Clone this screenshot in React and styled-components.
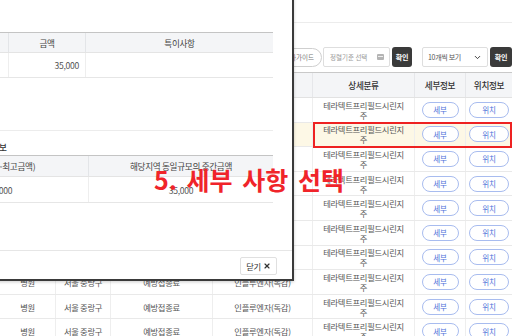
import React from 'react';
import styled, { createGlobalStyle } from 'styled-components';
import { ChevronDown, X } from 'lucide-react';

const GlobalStyle = createGlobalStyle`
  html, body { margin: 0; padding: 0; background: #fff; }
  body {
    font-family: "Noto Sans CJK KR", "Noto Sans", sans-serif;
    overflow: hidden;
  }
  * { box-sizing: border-box; }
`;

const Page = styled.div`
  position: relative;
  width: 512px;
  height: 336px;
  overflow: hidden;
  background: #fff;
`;

const TopBar = styled.div`
  height: 23px;
  border-bottom: 1px solid #ececec;
`;

const Toolbar = styled.div`
  display: flex;
  justify-content: flex-end;
  align-items: center;
  height: 20px;
  margin-top: 24px;
  gap: 2px;
`;

const GuidePill = styled.div`
  display: flex;
  align-items: center;
  height: 19px;
  padding: 0 7px 0 12px;
  border: 1px solid #cfcfcf;
  border-radius: 10px;
  font-size: 6.5px;
  color: #777;
  margin-right: -1px;
  white-space: nowrap;
`;

const DateInput = styled.div`
  display: flex;
  align-items: center;
  justify-content: space-between;
  width: 67px;
  height: 20px;
  padding: 0 5px 0 6px;
  border: 1px solid #dedede;
  border-radius: 2px;
  font-size: 6.5px;
  color: #9a9a9a;
  white-space: nowrap;
`;

const CalIcon = styled.span`
  display: inline-block;
  width: 7px;
  height: 6px;
  background: #b4b4b4;
  border-radius: 1px;
  position: relative;
  &::after {
    content: '';
    position: absolute;
    left: 1px; right: 1px; top: 2px;
    height: 1px;
    background: #eee;
  }
`;

const DarkButton = styled.button`
  width: ${p => p.$w || 20}px;
  height: 20px;
  padding: 0;
  border: 0;
  border-radius: 3px;
  background: #3a3a3a;
  color: #fff;
  font-family: inherit;
  font-size: 7px;
  font-weight: 700;
  letter-spacing: -0.2px;
`;

const SelectBox = styled.div`
  display: flex;
  align-items: center;
  justify-content: space-between;
  width: 66px;
  height: 20px;
  margin-left: 8px;
  padding: 0 5px 0 5px;
  border: 1px solid #dedede;
  border-radius: 2px;
  font-size: 7px;
  color: #555;
  letter-spacing: -0.3px;
  white-space: nowrap;
`;

const BgTable = styled.div`
  margin-top: 5px;
`;

const COLS = '56px 55px 102px 100px 102px 51px 46px';

const HeadRow = styled.div`
  display: grid;
  grid-template-columns: ${COLS};
  height: 26px;
  background: #f4f5f7;
  border-top: 1px solid #c9c9c9;
  border-bottom: 1px solid #e2e2e2;
`;

const HeadCell = styled.div`
  display: flex;
  align-items: center;
  justify-content: center;
  font-size: 8.6px;
  font-weight: 500;
  color: #333;
  letter-spacing: -0.3px;
  border-right: ${p => (p.$last ? 'none' : '1px solid #e6e7ea')};
`;

const BodyRow = styled.div`
  display: grid;
  grid-template-columns: ${COLS};
  height: 24.6px;
  background: ${p => (p.$active ? '#fdf8e6' : '#fff')};
  border-bottom: 1px solid #e9e9e9;
`;

const Cell = styled.div`
  display: flex;
  align-items: center;
  justify-content: center;
  padding: 0 ${p => (p.$wrap ? 8 : 2)}px;
  font-size: 8.3px;
  line-height: 10px;
  color: #555;
  letter-spacing: -0.3px;
  text-align: center;
  white-space: ${p => (p.$wrap ? 'normal' : 'nowrap')};
  border-right: ${p => (p.$last ? 'none' : '1px solid #eeeeee')};
  overflow: hidden;
`;

const OutlineButton = styled.button`
  width: ${p => p.$w || 38}px;
  height: 16px;
  padding: 0;
  border: 1px solid #a8bcef;
  border-radius: 9px;
  background: #fff;
  color: #4d72d9;
  font-family: inherit;
  font-size: 7.5px;
  letter-spacing: -0.2px;
  flex: none;
`;

/* ---------- modal ---------- */

const Modal = styled.div`
  position: absolute;
  left: -110px;
  top: -20px;
  width: 404px;
  border: 2px solid #3a3a3a;
  background: #fff;
  z-index: 5;
  box-shadow: 0 1px 3px rgba(0, 0, 0, 0.2);
`;

const ModalBody = styled.div`
  padding: 50px 19px 47px 20px;
`;

const Section = styled.div`
  padding-bottom: 52px;
  border-bottom: 1px solid #ececec;
`;

const SectionTitle = styled.div`
  margin: 11px 0 3px;
  font-size: 8.6px;
  line-height: 10px;
  font-weight: 500;
  color: #333;
  letter-spacing: -0.3px;
  white-space: nowrap;
`;

const MTable = styled.div`
  width: 361px;
`;

const MHead = styled.div`
  display: grid;
  grid-template-columns: ${p => p.$cols};
  height: ${p => p.$h}px;
  background: #f4f5f7;
  border-top: 1px solid #c4c4c4;
  border-bottom: 1px solid #e4e4e4;
`;

const MRow = styled.div`
  display: grid;
  grid-template-columns: ${p => p.$cols};
  height: ${p => p.$h}px;
  border-bottom: 1px solid #e6e6e6;
`;

const MCell = styled.div`
  display: flex;
  align-items: center;
  justify-content: ${p => (p.$right ? 'flex-end' : 'center')};
  padding: 0 6px;
  font-size: 8.6px;
  color: ${p => (p.$head ? '#444' : '#555')};
  letter-spacing: -0.3px;
  white-space: nowrap;
  border-right: ${p => (p.$last ? 'none' : `1px solid ${p.$head ? '#e3e5e8' : '#eeeeee'}`)};
`;

const ModalFooter = styled.div`
  display: flex;
  justify-content: flex-end;
  padding: 6px 15px 4px;
  border-top: 1px solid #e6e6e6;
`;

const CloseButton = styled.button`
  display: flex;
  align-items: center;
  gap: 2px;
  height: 18px;
  width: 37px;
  justify-content: center;
  padding: 0;
  border: 1px solid #e0e0e0;
  border-radius: 2px;
  background: #fff;
  color: #333;
  font-family: inherit;
  font-size: 8.3px;
  letter-spacing: -0.3px;
`;

/* ---------- annotation ---------- */

const RedBox = styled.div`
  position: absolute;
  left: 313px;
  top: 122px;
  width: 199px;
  height: 26px;
  border: 2px solid #ee2222;
  z-index: 6;
  pointer-events: none;
`;

const Callout = styled.div`
  position: absolute;
  left: 154px;
  top: 167px;
  font-size: 25px;
  line-height: 1;
  font-weight: 700;
  word-spacing: 4px;
  color: #f0242a;
  white-space: nowrap;
  z-index: 7;
`;

const rows = Array.from({ length: 10 }, (_, i) => i);

export default function App() {
  const t1 = '97px 77px 187px';
  const t2 = '177px 184px';
  return (
    <Page>
      <GlobalStyle />
      <TopBar />
      <Toolbar>
        <GuidePill>검사가이드</GuidePill>
        <DateInput>
          <span>정렬기준 선택</span>
          <CalIcon />
        </DateInput>
        <DarkButton>확인</DarkButton>
        <SelectBox>
          <span>10개씩 보기</span>
          <ChevronDown size={9} strokeWidth={2.5} color="#333" />
        </SelectBox>
        <DarkButton $w={22}>확인</DarkButton>
      </Toolbar>

      <BgTable>
        <HeadRow>
          <HeadCell>구분</HeadCell>
          <HeadCell>지역</HeadCell>
          <HeadCell>분류</HeadCell>
          <HeadCell>항목</HeadCell>
          <HeadCell>상세분류</HeadCell>
          <HeadCell>세부정보</HeadCell>
          <HeadCell $last>위치정보</HeadCell>
        </HeadRow>
        {rows.map(i => (
          <BodyRow key={i} $active={i === 1}>
            <Cell>병원</Cell>
            <Cell>서울 중랑구</Cell>
            <Cell>예방접종료</Cell>
            <Cell>인플루엔자(독감)</Cell>
            <Cell $wrap>테라텍트프리필드시린지주</Cell>
            <Cell>
              <OutlineButton $w={37}>세부</OutlineButton>
            </Cell>
            <Cell $last>
              <OutlineButton $w={40}>위치</OutlineButton>
            </Cell>
          </BodyRow>
        ))}
      </BgTable>

      <Modal>
        <ModalBody>
          <Section>
            <MTable>
              <MHead $cols={t1} $h={21}>
                <MCell $head>항목명</MCell>
                <MCell $head>금액</MCell>
                <MCell $head $last>특이사항</MCell>
              </MHead>
              <MRow $cols={t1} $h={25}>
                <MCell>인플루엔자(독감)</MCell>
                <MCell $right>35,000</MCell>
                <MCell $last />
              </MRow>
            </MTable>
          </Section>
          <SectionTitle>해당지역 동일규모 가격정보</SectionTitle>
          <MTable>
            <MHead $cols={t2} $h={22}>
              <MCell $head>(최저금액~최고금액)</MCell>
              <MCell $head $last>해당지역 동일규모의 중간금액</MCell>
            </MHead>
            <MRow $cols={t2} $h={26}>
              <MCell>35,000</MCell>
              <MCell $last>35,000</MCell>
            </MRow>
          </MTable>
        </ModalBody>
        <ModalFooter>
          <CloseButton>
            닫기 <X size={8} strokeWidth={3.5} />
          </CloseButton>
        </ModalFooter>
      </Modal>

      <RedBox />
      <Callout>5. 세부 사항 선택</Callout>
    </Page>
  );
}
